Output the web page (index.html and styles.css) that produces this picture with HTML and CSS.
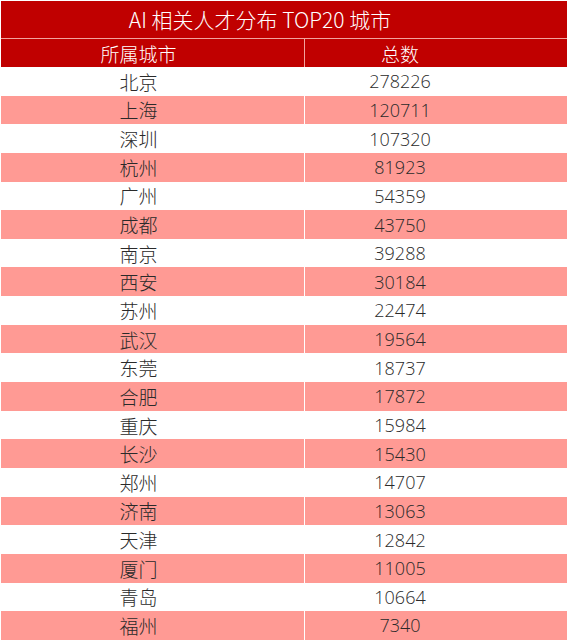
FILE: index.html
```html
<!DOCTYPE html>
<html lang="zh-CN">
<head>
<meta charset="utf-8">
<title>AI 相关人才分布 TOP20 城市</title>
<link rel="stylesheet" href="styles.css">
</head>
<body>
<div class="sheet">
  <div class="title">AI 相关人才分布 TOP20 城市</div>
  <div class="row head"><div class="city">所属城市</div><div class="num">总数</div></div>
  <div class="rows">
    <div class="row"><div class="city">北京</div><div class="num">278226</div></div>
    <div class="row alt"><div class="city">上海</div><div class="num">120711</div></div>
    <div class="row"><div class="city">深圳</div><div class="num">107320</div></div>
    <div class="row alt"><div class="city">杭州</div><div class="num">81923</div></div>
    <div class="row"><div class="city">广州</div><div class="num">54359</div></div>
    <div class="row alt"><div class="city">成都</div><div class="num">43750</div></div>
    <div class="row"><div class="city">南京</div><div class="num">39288</div></div>
    <div class="row alt"><div class="city">西安</div><div class="num">30184</div></div>
    <div class="row"><div class="city">苏州</div><div class="num">22474</div></div>
    <div class="row alt"><div class="city">武汉</div><div class="num">19564</div></div>
    <div class="row"><div class="city">东莞</div><div class="num">18737</div></div>
    <div class="row alt"><div class="city">合肥</div><div class="num">17872</div></div>
    <div class="row"><div class="city">重庆</div><div class="num">15984</div></div>
    <div class="row alt"><div class="city">长沙</div><div class="num">15430</div></div>
    <div class="row"><div class="city">郑州</div><div class="num">14707</div></div>
    <div class="row alt"><div class="city">济南</div><div class="num">13063</div></div>
    <div class="row"><div class="city">天津</div><div class="num">12842</div></div>
    <div class="row alt"><div class="city">厦门</div><div class="num">11005</div></div>
    <div class="row"><div class="city">青岛</div><div class="num">10664</div></div>
    <div class="row alt"><div class="city">福州</div><div class="num">7340</div></div>
  </div>
</div>
</body>
</html>
```
FILE: styles.css
```css
html, body {
  margin: 0;
  padding: 0;
  background: #ffffff;
}
body {
  font-family: "Noto Sans CJK SC", "Noto Sans", sans-serif;
  font-weight: 300;
  color: #2a2a2a;
}
.sheet {
  margin: 1px 0 0 1px;
  width: 566px;
}
.title {
  height: 37px;
  line-height: 37px;
  background: #c00000;
  color: #ffffff;
  font-size: 21px;
  text-align: center;
  padding-right: 48px;
  border-bottom: 1px solid #f2a39e;
}
.row {
  display: grid;
  grid-template-columns: 304px 1fr;
  height: 28.65px;
  font-size: 19px;
  align-items: center;
  background: #ffffff;
}
.row.alt {
  background: #ff9a94;
}
.row.head {
  height: 28px;
  background: #c00000;
  color: #ffffff;
}
.city, .num {
  height: 100%;
  display: flex;
  align-items: center;
  justify-content: center;
  line-height: 1;
}
.city {
  padding-right: 28px;
  border-right: 1px solid #ffffff;
}
.head .city {
  border-right-color: #f2a39e;
}
.num {
  padding-right: 72px;
  font-family: "Open Sans", "Noto Sans CJK SC", sans-serif;
  font-size: 18px;
}
.head .num {
  font-family: "Noto Sans CJK SC", sans-serif;
  font-size: 19px;
}
```
